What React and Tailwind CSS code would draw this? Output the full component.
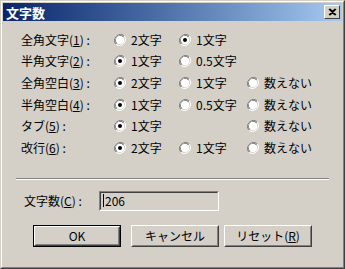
import React from "react";

const font = { fontFamily: '"Noto Sans CJK JP", "Liberation Sans", sans-serif' };

function Radio({ checked }) {
  return (
    <svg width="12" height="12" viewBox="0 0 12 12" className="shrink-0">
      <path d="M10.2 1.8A6 6 0 0 0 1.8 10.2" fill="none" stroke="#808080" strokeWidth="1" />
      <path d="M9.4 2.6A4.9 4.9 0 0 0 2.6 9.4" fill="none" stroke="#404040" strokeWidth="1" />
      <path d="M1.8 10.2A6 6 0 0 0 10.2 1.8" fill="none" stroke="#ffffff" strokeWidth="1" />
      <circle cx="6" cy="6" r="4.3" fill="#ffffff" />
      {checked ? <circle cx="6" cy="6" r="2" fill="#000000" /> : null}
    </svg>
  );
}

function Opt({ label, checked }) {
  return (
    <div className="flex items-center gap-[5px] text-[12px] text-black">
      <Radio checked={checked} />
      <span>{label}</span>
    </div>
  );
}

function Btn({ children, def, className = "" }) {
  return (
    <div className={`${def ? "border border-black" : ""} ${className}`}>
      <div
        className={`${def ? "w-[86px] h-[20px]" : "w-[88px] h-[22px]"} border border-t-white border-l-white border-r-[#404040] border-b-[#404040] bg-[#d4d0c8]`}
      >
        <div className="flex h-full w-full items-center justify-center border border-t-[#d4d0c8] border-l-[#d4d0c8] border-r-[#808080] border-b-[#808080] text-[12px] text-black">
          {children}
        </div>
      </div>
    </div>
  );
}

const rows = [
  { label: "全角文字", n: "1", opts: [["2文字", false], ["1文字", true]] },
  { label: "半角文字", n: "2", opts: [["1文字", true], ["0.5文字", false]] },
  { label: "全角空白", n: "3", opts: [["2文字", true], ["1文字", false], ["数えない", false]] },
  { label: "半角空白", n: "4", opts: [["1文字", true], ["0.5文字", false], ["数えない", false]] },
  { label: "タブ", n: "5", opts: [["1文字", true], null, ["数えない", false]] },
  { label: "改行", n: "6", opts: [["2文字", true], ["1文字", false], ["数えない", false]] },
];

export default function App() {
  return (
    <div style={font} className="h-[269px] w-[345px] bg-[#d4d0c8]">
      <div className="h-full w-full border border-t-[#d4d0c8] border-l-[#d4d0c8] border-r-[#404040] border-b-[#404040]">
        <div className="flex h-full w-full flex-col border border-t-white border-l-white border-r-[#808080] border-b-[#808080] p-px">
          <div className="flex h-[18px] items-center justify-between bg-gradient-to-r from-[#0a246a] to-[#a6caf0] pl-[3px] pr-[2px]">
            <span className="text-[13px] font-bold leading-none text-white">文字数</span>
            <div className="h-[14px] w-[16px] border border-t-white border-l-white border-r-[#404040] border-b-[#404040] bg-[#d4d0c8]">
              <svg width="14" height="12" viewBox="0 0 14 12">
                <path d="M4 3l6 6M10 3l-6 6M5 3l6 6M11 3l-6 6" stroke="#000" strokeWidth="1.2" />
              </svg>
            </div>
          </div>

          <div className="grid grid-cols-[93px_65px_68px_auto] auto-rows-[21.6px] pl-[18px] pt-[8px]">
            {rows.map((r) => (
              <React.Fragment key={r.label}>
                <div className="flex items-center text-[12px] text-black">
                  {r.label}(<span className="underline">{r.n}</span>) :
                </div>
                {[0, 1, 2].map((i) => (
                  <div key={i} className="flex items-center">
                    {r.opts[i] ? <Opt label={r.opts[i][0]} checked={r.opts[i][1]} /> : null}
                  </div>
                ))}
              </React.Fragment>
            ))}
          </div>

          <div className="mx-[13px] mt-[19px] border-t border-b border-t-[#808080] border-b-white" />

          <div className="mt-[11px] flex items-center pl-[21px]">
            <span className="w-[75px] text-[12px] text-black">
              文字数(<span className="underline">C</span>) :
            </span>
            <div className="h-[20px] w-[120px] border border-t-[#808080] border-l-[#808080] border-r-white border-b-white">
              <div className="flex h-full w-full items-center border border-t-[#404040] border-l-[#404040] border-r-[#d4d0c8] border-b-[#d4d0c8] bg-[#d4d0c8] pl-[2px] text-[12px] text-black">
                <span className="mr-px h-[13px] w-px bg-black" />
                206
              </div>
            </div>
          </div>

          <div className="mt-[14px] flex items-center pl-[30px]">
            <Btn def>OK</Btn>
            <Btn className="ml-[10px]">キャンセル</Btn>
            <Btn className="ml-[5px]">
              リセット(<span className="underline">R</span>)
            </Btn>
          </div>
        </div>
      </div>
    </div>
  );
}
